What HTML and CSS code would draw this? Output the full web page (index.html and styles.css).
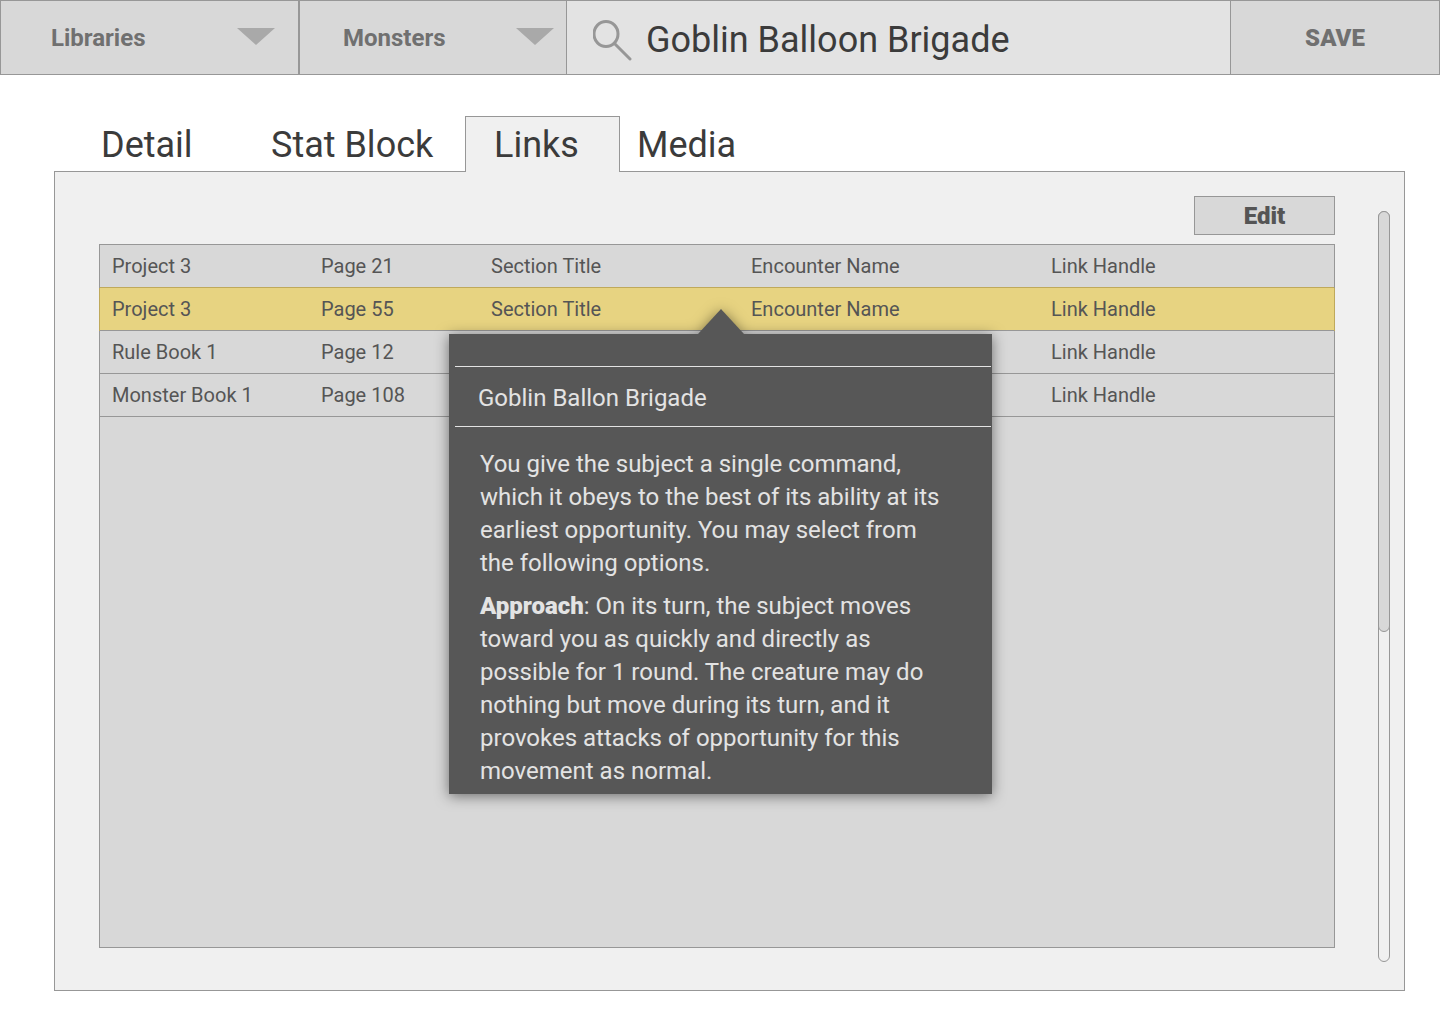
FILE: index.html
```html
<!DOCTYPE html>
<html lang="en">
	<head>
		<meta charset="UTF-8">
		<title>Goblin Balloon Brigade</title>
		<link rel="stylesheet" href="styles.css">
	</head>
	<body>
		<header class="toolbar">
			<div class="picker library">
				<select aria-label="Library">
					<option>Libraries</option>
				</select>
				<svg class="arrow" width="38" height="17" viewBox="0 0 38 17"><path d="M0 0h38L19 17z"/></svg>
			</div>
			<div class="picker category">
				<select aria-label="Category">
					<option>Monsters</option>
				</select>
				<svg class="arrow" width="38" height="17" viewBox="0 0 38 17"><path d="M0 0h38L19 17z"/></svg>
			</div>
			<label class="search">
				<svg width="40" height="42" viewBox="0 0 40 42"><ellipse cx="13" cy="15" rx="12" ry="12.5"/><path d="M22 25l15 15"/></svg>
				<input type="text" name="search" aria-label="Search" value="Goblin Balloon Brigade" />
			</label>
			<button type="button" class="save">SAVE</button>
		</header>

		<main>
			<nav class="tabs">
				<a href="#detail" class="tab-detail">Detail</a>
				<a href="#stat" class="tab-stat">Stat Block</a>
				<a href="#links" class="tab-links">Links</a>
				<a href="#media" class="tab-media">Media</a>
			</nav>
			<section class="panel" id="links">
				<div class="content">
					<button type="button" class="edit">Edit</button>
					<div class="list">
						<table>
							<colgroup>
								<col class="col-source"><col class="col-page"><col class="col-section"><col class="col-encounter"><col>
							</colgroup>
							<tr><td>Project 3</td><td>Page 21</td><td>Section Title</td><td>Encounter Name</td><td>Link Handle</td></tr>
							<tr class="selected"><td>Project 3</td><td>Page 55</td><td>Section Title</td><td>Encounter Name</td><td>Link Handle</td></tr>
							<tr><td>Rule Book 1</td><td>Page 12</td><td></td><td></td><td>Link Handle</td></tr>
							<tr><td>Monster Book 1</td><td>Page 108</td><td></td><td></td><td>Link Handle</td></tr>
						</table>
						<div class="popover">
							<h2>Goblin Ballon Brigade</h2>
							<div class="text">
								<p>You give the subject a single command, which it obeys to the best of its ability at its earliest opportunity. You may select from the following options.</p>
								<p><b>Approach</b>: On its turn, the subject moves toward you as quickly and directly as possible for 1 round. The creature may do nothing but move during its turn, and it provokes attacks of opportunity for this movement as normal.</p>
							</div>
						</div>
					</div>
				</div>
				<div class="scrollbar"><div class="thumb"></div></div>
			</section>
		</main>
	</body>
</html>
```

FILE: styles.css
```css
*{
	box-sizing: border-box;
}
body{
	margin: 0;
	min-height: 100vh;
	display: flex;
	flex-direction: column;
	background: #fff;
	color: #555;
	font-family: Roboto, "Liberation Sans", sans-serif;
}
button, select, input{
	font-family: inherit;
	border-radius: 0;
	outline: none;
}

/* top bar */
.toolbar{
	display: flex;
	height: 75px;
}
.picker{
	position: relative;
	border: 1px solid #979797;
	background: #d8d8d8;
}
.library{
	width: 299px;
}
.category{
	width: 268px;
}
.picker select{
	width: 100%;
	height: 100%;
	border: 0;
	padding: 0 50px;
	background: none;
	color: #707070;
	font-size: 24px;
	font-weight: bold;
	appearance: none;
	cursor: pointer;
}
.category select{
	padding-left: 43px;
}
.arrow{
	position: absolute;
	top: 27px;
	right: 23px;
	fill: #a9a9a9;
	pointer-events: none;
}
.category .arrow{
	right: 12px;
}
.search{
	flex: 1;
	min-width: 0;
	display: flex;
	align-items: center;
	gap: 13px;
	padding: 5px 26px 0;
	border: solid #979797;
	border-width: 1px 0;
	background: #e3e3e3;
}
.search svg{
	flex: none;
	fill: none;
	stroke: #979797;
	stroke-width: 3;
	stroke-linecap: round;
}
.search input{
	flex: 1;
	min-width: 0;
	border: 0;
	padding: 0;
	background: none;
	color: #3b3b3b;
	font-size: 36px;
}
.save{
	width: 210px;
	border: 1px solid #979797;
	background: #d8d8d8;
	color: #707070;
	font-size: 24px;
	font-weight: 900;
	cursor: pointer;
}

main{
	flex: 1;
	display: flex;
	flex-direction: column;
	padding: 41px 35px 33px 54px;
}

/* tabs */
.tabs{
	display: flex;
	margin-bottom: -1px;
	padding-left: 46px;
}
.tabs a{
	height: 56px;
	border: 1px solid transparent;
	border-bottom: 0;
	line-height: 56px;
	color: #3b3b3b;
	font-size: 36px;
	text-decoration: none;
	white-space: nowrap;
}
.tabs .tab-detail{
	width: 170px;
}
.tabs .tab-stat{
	width: 195px;
}
.tabs .tab-links{
	width: 155px;
	padding-left: 28px;
	border-color: #979797;
	background: #f0f0f0;
	position: relative;
}
.tabs .tab-media{
	padding-left: 16px;
}

/* panel under the tabs */
.panel{
	flex: 1;
	display: flex;
	gap: 43px;
	padding: 24px 14px 28px 44px;
	border: 1px solid #979797;
	background: #f0f0f0;
}
.content{
	flex: 1;
	min-width: 0;
	display: flex;
	flex-direction: column;
	gap: 9px;
	padding-bottom: 14px;
}
.edit{
	align-self: flex-end;
	width: 141px;
	height: 39px;
	padding: 0;
	border: 1px solid #979797;
	background: #d8d8d8;
	color: #555;
	font-size: 24px;
	font-weight: 900;
	cursor: pointer;
}
.list{
	position: relative;
	flex: 1;
	border: 1px solid #979797;
	background: #d8d8d8;
}
.list table{
	width: 100%;
	table-layout: fixed;
	border-spacing: 0;
	font-size: 20px;
}
.col-source{
	width: 209px;
}
.col-page{
	width: 170px;
}
.col-section{
	width: 260px;
}
.col-encounter{
	width: 300px;
}
.list td{
	height: 43px;
	padding: 0 0 0 12px;
	border-bottom: 1px solid #979797;
}
/* gold edge drawn over the grey lines */
.selected td{
	background: #e7d381;
	box-shadow: 0 -1px #bfa95b;
}
.selected td:first-child{
	box-shadow: 0 -1px #bfa95b, -1px 0 #bfa95b;
}
.selected td:last-child{
	box-shadow: 0 -1px #bfa95b, 1px 0 #bfa95b;
}

.popover{
	position: absolute;
	top: 89px;
	left: 349px;
	width: 543px;
	padding: 32px 1px 6px 6px;
	background: #575757;
	color: #e3e3e3;
	font-size: 24px;
	filter: drop-shadow(0 2px 7px rgba(0,0,0,.5));
}
.popover:before{
	content: "";
	position: absolute;
	top: -25px;
	left: 249px;
	border: solid transparent;
	border-width: 0 23px 25px;
	border-bottom-color: #575757;
}
.popover h2{
	margin: 0;
	padding: 3px 0 0 23px;
	border: solid #e3e3e3;
	border-width: 1px 0;
	line-height: 56px;
	font-size: 24px;
	font-weight: normal;
}
.popover .text{
	padding: 21px 45px 0 25px;
	line-height: 33px;
}
.popover p{
	margin: 0 0 10px;
}
.popover p:last-child{
	margin: 0;
}
.popover b{
	font-weight: 900;
}

.scrollbar{
	width: 12px;
	margin-top: 15px;
	border: 1px solid #979797;
	border-radius: 6px;
}
.thumb{
	box-sizing: content-box;
	height: 56%;
	margin: -1px;
	border: 1px solid #979797;
	border-radius: 6px;
	background: #d8d8d8;
}
```
